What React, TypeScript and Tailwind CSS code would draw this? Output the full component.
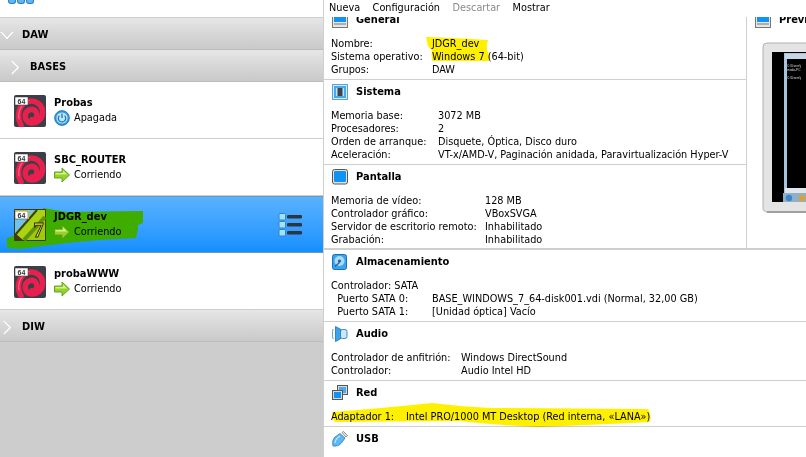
import React from "react";

const font = "font-['DejaVu_Sans_Condensed','Liberation_Sans',Arial,sans-serif]";

const VmIcon = ({ win7 }: { win7?: boolean }) => (
  <svg width="32" height="32" viewBox="0 0 32 32" className="relative shrink-0">
    {win7 ? (
      <>
        <rect x="0" y="0" width="32" height="32" rx="1" fill="#3f3a12" />
        <rect x="1" y="1" width="30" height="30" fill="#9acb12" />
        <path d="M1 1H21L1 24Z" fill="#6ec3ef" />
        <path d="M21 1H31V10L12 31H1V26Z" fill="#a8d411" />
        <path d="M1 26L23 1" stroke="#3f3a12" strokeWidth="2" />
        <path d="M10 31L31 8" stroke="#65920c" strokeWidth="4" />
        <path d="M1 31V24L9 31Z" fill="#3f3a12" />
        <rect x="1" y="1" width="14" height="9" fill="#fbe017" />
        <text x="24.5" y="28" textAnchor="middle" fontSize="21" fontWeight="700" fill="#fde81a" stroke="#2c2a08" strokeWidth="0.9" fontFamily="'Liberation Serif',serif">7</text>
      </>
    ) : (
      <>
        <rect x="0" y="0" width="32" height="32" rx="2" fill="#3c3f47" />
        <path d="M7 30C2 21 5 9 14 6.5C22 4.5 29 10 28.5 18C28 25 22 28.5 17.5 28C12.5 27.5 10.5 23 11.5 19C12.5 15 18 13 21 15.5C23.5 18 22.5 23 18.5 24" fill="none" stroke="#e8204e" strokeWidth="5.6" strokeLinecap="round" />
        <circle cx="18" cy="20" r="2.2" fill="#3c3f47" />
        <path d="M5 24C3.5 16 8 8 15 5.5" fill="none" stroke="#f8637f" strokeWidth="1.2" strokeLinecap="round" />
      </>
    )}
    <rect x="1" y="2" width="13" height="8" fill="#fff" stroke="#333" strokeWidth="0.5" />
    <text x="7.5" y="8.5" textAnchor="middle" fontSize="7" fontWeight="700" fill="#333" fontFamily="'Liberation Sans',sans-serif">64</text>
  </svg>
);

const PowerIcon = () => (
  <svg width="16" height="16" viewBox="0 0 16 16">
    <circle cx="8" cy="8" r="7.4" fill="#2a9be8" stroke="#1b6fb0" strokeWidth="0.8" />
    <circle cx="8" cy="8" r="5.6" fill="#bfe6fb" />
    <path d="M5.4 5.6A3.7 3.7 0 1 0 10.6 5.6" fill="none" stroke="#1a75bd" strokeWidth="1.3" />
    <path d="M8 3.6V8" stroke="#1a75bd" strokeWidth="1.3" />
  </svg>
);

const RunIcon = () => (
  <svg width="16" height="16" viewBox="0 0 16 16">
    <path d="M0.5 5H8V1L15.5 8L8 15V11H0.5Z" fill="#95d32c" stroke="#5b9a18" strokeWidth="0.9" />
    <path d="M1.5 6H9V3.5L13 7.5H1.5Z" fill="#d5f08e" />
  </svg>
);

const Chevron = ({ down }: { down?: boolean }) => (
  <svg width={down ? 14 : 9} height={down ? 9 : 15} viewBox={down ? "0 0 14 9" : "0 0 9 15"}>
    <path d={down ? "M1 2L7 8.5L13 2" : "M2 1L8.5 7.5L2 14"} fill="none" stroke="#a8a8a8" strokeWidth="1" />
    <path d={down ? "M1 1L7 7.5L13 1" : "M1 1L7.5 7.5L1 14"} fill="none" stroke="#fff" strokeWidth="1.6" />
  </svg>
);

const Group = ({ name, indent, open, chevron }: { name: string; indent: string; open?: boolean; chevron: string }) => (
  <div className="h-[32px] shrink-0 flex items-center pt-[3px] border-b border-[#bdbdbd] bg-gradient-to-b from-[#e6e6e6] to-[#c9c9c9]">
    <div className={chevron}>
      <Chevron down={open} />
    </div>
    <span className={`${indent} text-[11px] font-bold text-black`}>{name}</span>
  </div>
);

const VmRow = ({ name, status, off, win7, selected }: { name: string; status: string; off?: boolean; win7?: boolean; selected?: boolean }) => (
  <div
    className={
      selected
        ? "relative h-[57px] shrink-0 flex items-center pl-[14px] border-y border-[#6b96b8] bg-gradient-to-b from-[#58b2ff] to-[#1190ff]"
        : "h-[57px] shrink-0 flex items-center pl-[14px] pt-[2px] border-b border-[#cfcfcf] bg-white"
    }
  >
    {selected && (
      <svg width="145" height="45" viewBox="0 0 145 45" className="absolute left-[3px] top-[9px]">
        <path d="M40 2L64 6L140 5V17L135 19V23L133 32L97 34L64 37L17 43L4 42V32L11 30L43 24Z" fill="#3fad00" />
      </svg>
    )}
    <VmIcon win7={win7} />
    <div className="relative ml-[8px] flex flex-col">
      <span className="text-[11px] leading-[14px] font-bold text-black">{name}</span>
      <span className="flex items-center gap-[4px] text-[10.8px] leading-[16px] text-black">
        {off ? <PowerIcon /> : <RunIcon />}
        {status}
      </span>
    </div>
    {selected && (
      <svg width="24" height="24" viewBox="0 0 24 24" className="absolute left-[278px] top-[16px]">
        {[1, 9, 17].map((y) => (
          <g key={y}>
            <rect x="1" y={y - 0.5} width="6.5" height="6.5" rx="1" fill="#a4e0fb" stroke="#2a86cf" />
            <rect x="9" y={y + 1} width="15" height="3.5" rx="1.2" fill="#2b3640" />
          </g>
        ))}
      </svg>
    )}
  </div>
);

const HeadIcon = ({ kind }: { kind: string }) => {
  if (kind === "sistema")
    return (
      <svg width="16" height="16" viewBox="0 0 16 16">
        <rect x="0.5" y="0.5" width="15" height="15" fill="#d8ecf8" stroke="#5aa5d8" />
        <rect x="2" y="2" width="12" height="12" fill="#46aaf0" />
        <rect x="4" y="4" width="8" height="8" fill="#bfe4fa" />
        <rect x="5.5" y="4" width="5" height="8" fill="#3c4450" />
      </svg>
    );
  if (kind === "pantalla")
    return (
      <svg width="16" height="16" viewBox="0 0 16 16">
        <rect x="0.5" y="0.5" width="15" height="14.5" rx="2" fill="#e2e2e2" stroke="#555" />
        <rect x="2" y="2" width="12" height="11" rx="1" fill="#1093f5" />
      </svg>
    );
  if (kind === "disco")
    return (
      <svg width="16" height="16" viewBox="0 0 16 16">
        <rect x="0.5" y="0.5" width="14" height="15" rx="2" fill="#3aa3ee" stroke="#1f6fb5" />
        <circle cx="7.5" cy="7" r="5" fill="#a8dcf9" />
        <circle cx="7.5" cy="7" r="1.6" fill="#2b5f8e" />
        <path d="M3 12.5L7.5 8.5" stroke="#2b5f8e" strokeWidth="1.4" />
      </svg>
    );
  if (kind === "audio")
    return (
      <svg width="16" height="16" viewBox="0 0 16 16">
        <path d="M1.2 3C0 6 0 10 1.2 13" fill="none" stroke="#4a9ed8" />
        <path d="M3.5 0.5L9 3.5V12.5L3.5 15.5Z" fill="#3aa3ee" stroke="#2a6ea8" strokeWidth="0.8" />
        <rect x="8.5" y="3.5" width="6.5" height="9" rx="2" fill="#c6e8fb" stroke="#2a6ea8" strokeWidth="0.8" />
      </svg>
    );
  if (kind === "red")
    return (
      <svg width="16" height="16" viewBox="0 0 16 16">
        <rect x="5.5" y="0.5" width="10" height="9" fill="#dadada" stroke="#555" />
        <rect x="7" y="2" width="7" height="6" fill="#4aa8ec" />
        <rect x="0.5" y="5.5" width="10" height="9" fill="#dadada" stroke="#555" />
        <rect x="2" y="7" width="7" height="6" fill="#1093f5" />
      </svg>
    );
  if (kind === "usb")
    return (
      <svg width="16" height="16" viewBox="0 0 16 16">
        <path d="M1 15C0 11 1 8 3 6L8 2.5L13 7L9.5 12C7.5 14.5 4 15.5 1 15Z" fill="#5db7f0" stroke="#2c7fc0" strokeWidth="0.8" />
        <path d="M10 1.5L11.5 0.5L15.5 4.5L14 6Z" fill="#e8e8e8" stroke="#777" strokeWidth="0.8" />
        <path d="M3 12C3 9 5 7 8 5" fill="none" stroke="#c5e8fb" strokeWidth="1.2" />
      </svg>
    );
  return (
    <svg width="16" height="16" viewBox="0 0 16 16">
      <rect x="0.5" y="0.5" width="15" height="15" fill="#e6e6e6" stroke="#777" />
      <rect x="2" y="2" width="12" height="8" fill="#1093f5" />
      <rect x="2" y="11.5" width="12" height="1" fill="#777" />
    </svg>
  );
};

type Row = [string, string];

const Section = ({ icon, title, rows, col, first }: { icon: string; title: string; rows: Row[]; col: string; first?: boolean }) => (
  <section className={first ? "-mt-[9px] pb-[3px] pt-[3px]" : "border-t border-[#cfcfcf] pb-[3px] pt-[3px]"}>
    <div className="h-[18px] mb-[8px] flex items-center pl-[8px]">
      <HeadIcon kind={icon} />
      <span className="ml-[8px] text-[11px] font-bold text-black">{title}</span>
    </div>
    <div className="pl-[7px] text-[10.8px] leading-[13px] text-black">
      {rows.map(([k, v]) => (
        <div key={k} className={`grid ${col} whitespace-nowrap`}>
          <span>{k}</span>
          <span>{v}</span>
        </div>
      ))}
    </div>
  </section>
);

const Preview = () => (
  <div className="w-[59px] overflow-hidden">
    <div className="h-[18px] flex items-center -mt-[6px] pl-[8px] w-[140px]">
      <HeadIcon kind="general" />
      <span className="ml-[8px] text-[11px] font-bold text-black">Previsualización</span>
    </div>
    <svg width="60" height="176" viewBox="0 0 60 176" className="mt-[11px] block">
      <path d="M60 3H20Q16 3 16 7V168Q16 172 21 172H60Z" fill="#e4e4e4" stroke="#b0b0b0" />
      <path d="M20 172H60" stroke="#a0a0a0" strokeWidth="2" />
      <rect x="25" y="12" width="35" height="150" fill="#000" />
      <rect x="37" y="13" width="23" height="140" fill="#a8c4dc" />
      <rect x="38" y="14" width="22" height="5" fill="#c8d6e4" />
      <rect x="40" y="19" width="20" height="129" fill="#000" />
      <text x="40" y="27" fontSize="3.2" fill="#ddd" fontFamily="'Liberation Sans',sans-serif">C:\Users\j</text>
      <text x="40" y="31" fontSize="3.2" fill="#ddd" fontFamily="'Liberation Sans',sans-serif">modo-PC</text>
      <text x="40" y="39" fontSize="3.2" fill="#ddd" fontFamily="'Liberation Sans',sans-serif">C:\Users\j</text>
      <rect x="38" y="148" width="22" height="5" fill="#e0e6ec" />
      <rect x="36" y="153" width="24" height="9" fill="#8fb0c8" />
      <circle cx="42" cy="158" r="3.2" fill="#3a86c8" />
      <circle cx="55" cy="158" r="3.2" fill="#d8a23a" />
    </svg>
  </div>
);

export default function App() {
  return (
    <div className={`${font} relative w-[806px] h-[457px] flex overflow-hidden bg-white`}>
      <aside className="w-[324px] shrink-0 h-full flex flex-col border-r border-[#cfcfcf] bg-[#cdcdcd]">
        <div className="h-[18px] shrink-0 bg-white border-b border-[#cfcfcf] pl-[8px] flex gap-[1px] items-start">
          {[0, 1, 2].map((i) => (
            <div key={i} className="w-[8px] h-[4px] rounded-b-[3px] bg-[#5db7f0] border border-t-0 border-[#2c7fc0]" />
          ))}
        </div>
        <Group name="DAW" indent="ml-[8px]" open chevron="ml-[0px] w-[14px]" />
        <Group name="BASES" indent="ml-[10px]" chevron="ml-[11px] w-[9px]" />
        <VmRow name="Probas" status="Apagada" off />
        <VmRow name="SBC_ROUTER" status="Corriendo" />
        <VmRow name="JDGR_dev" status="Corriendo" win7 selected />
        <VmRow name="probaWWW" status="Corriendo" />
        <Group name="DIW" indent="ml-[10px]" chevron="ml-[3px] w-[9px]" />
      </aside>
      <main className="flex-1 min-w-0 h-full flex flex-col">
        <nav className="relative z-10 h-[17px] shrink-0 bg-white flex items-center pl-[5px] gap-[12.5px] text-[10.8px] text-black">
          <span>Nueva</span>
          <span>Configuración</span>
          <span className="text-[#8a8a8a]">Descartar</span>
          <span>Mostrar</span>
        </nav>
        <div className="flex-1 min-h-0">
          <div className="flex h-[232px] border-b border-[#cfcfcf]">
            <div className="w-[423px] shrink-0 border-r border-[#cfcfcf]">
              <Section
                first
                icon="general"
                title="General"
                col="grid-cols-[101px_1fr]"
                rows={[
                  ["Nombre:", "JDGR_dev"],
                  ["Sistema operativo:", "Windows 7 (64-bit)"],
                  ["Grupos:", "DAW"],
                ]}
              />
              <Section
                icon="sistema"
                title="Sistema"
                col="grid-cols-[107px_1fr]"
                rows={[
                  ["Memoria base:", "3072 MB"],
                  ["Procesadores:", "2"],
                  ["Orden de arranque:", "Disquete, Óptica, Disco duro"],
                  ["Aceleración:", "VT-x/AMD-V, Paginación anidada, Paravirtualización Hyper-V"],
                ]}
              />
              <Section
                icon="pantalla"
                title="Pantalla"
                col="grid-cols-[154px_1fr]"
                rows={[
                  ["Memoria de vídeo:", "128 MB"],
                  ["Controlador gráfico:", "VBoxSVGA"],
                  ["Servidor de escritorio remoto:", "Inhabilitado"],
                  ["Grabación:", "Inhabilitado"],
                ]}
              />
            </div>
            <Preview />
          </div>
          <Section
            icon="disco"
            title="Almacenamiento"
            col="grid-cols-[101px_1fr]"
            rows={[
              ["Controlador: SATA", ""],
              ["\u00a0\u00a0Puerto SATA 0:", "BASE_WINDOWS_7_64-disk001.vdi (Normal, 32,00 GB)"],
              ["\u00a0\u00a0Puerto SATA 1:", "[Unidad óptica] Vacío"],
            ]}
          />
          <Section
            icon="audio"
            title="Audio"
            col="grid-cols-[130px_1fr]"
            rows={[
              ["Controlador de anfitrión:", "Windows DirectSound"],
              ["Controlador:", "Audio Intel HD"],
            ]}
          />
          <Section
            icon="red"
            title="Red"
            col="grid-cols-[75px_1fr]"
            rows={[["Adaptador 1:", "Intel PRO/1000 MT Desktop (Red interna, «LANA»)"]]}
          />
          <Section icon="usb" title="USB" col="grid-cols-[75px_1fr]" rows={[]} />
        </div>
      </main>
      {/* marcador amarillo encima del texto */}
      <svg width="806" height="457" viewBox="0 0 806 457" className="absolute inset-0 z-20 pointer-events-none mix-blend-multiply">
        <path d="M426 37Q455 38 488 40Q486 45 487 50Q490 55 489 61L432 61Q431 55 432 50Q429 48 428 46Z" fill="#fff000" />
        <path d="M332 412Q385 408 432 403Q465 407 492 408L648 409Q652 415 650 422Q590 425 538 427Q495 425 458 421L335 422Q331 417 332 412Z" fill="#fff000" />
      </svg>
    </div>
  );
}
